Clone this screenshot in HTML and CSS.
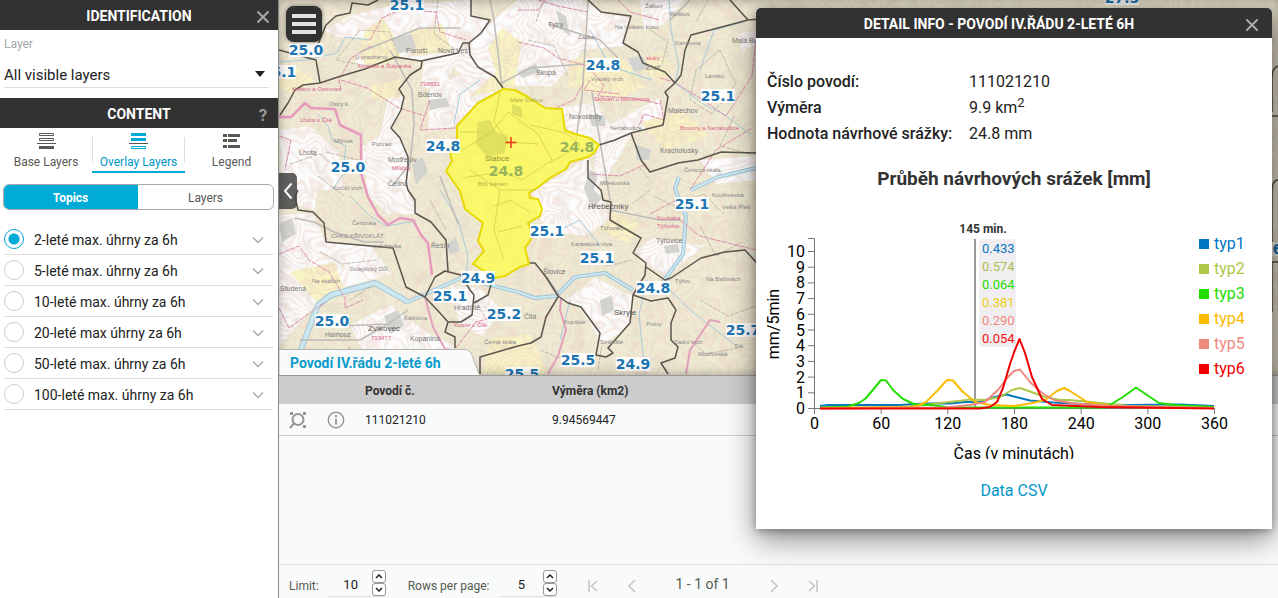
FILE: index.html
```html
<!DOCTYPE html>
<html lang="cs">
<head>
<meta charset="utf-8">
<title>Povodí – návrhové srážky</title>
<link rel="stylesheet" href="styles.css">
</head>
<body class="app">
<aside class="sidebar">
  <header class="bar"><h2 class="bar-title">Identification</h2>
    <button class="bar-button" aria-label="Close"><svg width="14" height="14" viewBox="0 0 14 14"><path d="M1.5 1.5l11 11M12.500 1.500l-11 11" class="cross"/></svg></button>
  </header>
  <div class="layer-field">
    <label for="layer">Layer</label>
    <div class="select-wrap">
      <select id="layer"><option>All visible layers</option></select>
      <svg class="caret" width="10" height="6" viewBox="0 0 10 6"><path d="M0 0h10L5 6z" fill="#222"/></svg>
    </div>
  </div>
  <header class="bar"><h2 class="bar-title">Content</h2><button class="bar-button help" aria-label="Help">?</button></header>
  <nav class="tabs">
    <button class="tab"><svg width="19" height="17" viewBox="0 0 19 17"><path d="M2.500 1.500h14v2h-14zM2.500 6.500h14v2h-14z" fill="none" stroke="#5a5a55"/><path d="M0 11.500h19" stroke="#5a5a55"/><path d="M2 14h15v3H2z" fill="#5a5a55"/></svg>Base Layers</button>
    <button class="tab active"><svg width="19" height="17" viewBox="0 0 19 17"><path d="M2 1h15v3H2zM2 6h15v3H2z" fill="#00abd8"/><path d="M0 11.500h19" stroke="#555"/><path d="M2.500 14.500h14v2h-14z" fill="none" stroke="#00abd8"/></svg>Overlay Layers</button>
    <button class="tab"><svg width="19" height="17" viewBox="0 0 19 17"><path d="M1 2h4v3H1zM1 7h4v3H1zM1 13h4v3H1zM6 2h12v3H6zM6 7h9v3H6zM6 13h12v3H6z" fill="#5a5a55"/></svg>Legend</button>
  </nav>
  <div class="segmented"><button class="segment on">Topics</button><button class="segment">Layers</button></div>
  <ul class="topics">
    <li><input type="radio" name="topic" id="t1" checked><label for="t1">2-leté max. úhrny za 6h</label><button class="expand" aria-label="Expand"><svg width="12" height="8" viewBox="0 0 12 8"><path d="M1 1.500l5 5 5-5"/></svg></button></li>
    <li><input type="radio" name="topic" id="t2"><label for="t2">5-leté max. úhrny za 6h</label><button class="expand" aria-label="Expand"><svg width="12" height="8" viewBox="0 0 12 8"><path d="M1 1.500l5 5 5-5"/></svg></button></li>
    <li><input type="radio" name="topic" id="t3"><label for="t3">10-leté max. úhrny za 6h</label><button class="expand" aria-label="Expand"><svg width="12" height="8" viewBox="0 0 12 8"><path d="M1 1.500l5 5 5-5"/></svg></button></li>
    <li><input type="radio" name="topic" id="t4"><label for="t4">20-leté max úhrny za 6h</label><button class="expand" aria-label="Expand"><svg width="12" height="8" viewBox="0 0 12 8"><path d="M1 1.500l5 5 5-5"/></svg></button></li>
    <li><input type="radio" name="topic" id="t5"><label for="t5">50-leté max. úhrny za 6h</label><button class="expand" aria-label="Expand"><svg width="12" height="8" viewBox="0 0 12 8"><path d="M1 1.500l5 5 5-5"/></svg></button></li>
    <li><input type="radio" name="topic" id="t6"><label for="t6">100-leté max. úhrny za 6h</label><button class="expand" aria-label="Expand"><svg width="12" height="8" viewBox="0 0 12 8"><path d="M1 1.500l5 5 5-5"/></svg></button></li>
  </ul>
</aside>

<main class="main">
  <section class="map">
    <svg class="map-canvas" viewBox="279 0 999 375" preserveAspectRatio="xMinYMin slice">
      <defs>
        <filter id="contours" x="0" y="0" width="100%" height="100%">
          <feTurbulence type="fractalNoise" baseFrequency="0.016" numOctaves="3" seed="8"/>
          <feColorMatrix values="0 0 0 0 .86  0 0 0 0 .66  0 0 0 0 .58  1 0 0 0 0"/>
          <feComponentTransfer><feFuncA type="table" tableValues="0 0 .7 0 0 .7 0 0 .7 0 0 .7 0 0 .7 0 0 .7 0 0 .7 0 0 .7 0 0 .7 0 0 .7 0 0 .7 0 0 .7 0 0 .7 0 0 .7 0 0 .7 0 0"/></feComponentTransfer>
        </filter>
        <filter id="relief" x="0" y="0" width="100%" height="100%">
          <feTurbulence type="fractalNoise" baseFrequency="0.07" numOctaves="3" seed="3"/>
          <feColorMatrix values="0 0 0 0 .6  0 0 0 0 .57  0 0 0 0 .48  1.600 0 0 0 -.75"/>
        </filter>
      </defs>
      <rect x="279" width="999" height="375" fill="#efebd3"/>
      <g fill="#fcfcfd">
        <path d="M325 30l25-14 40-10 80-6 2 14 18 8-14 20-10 2-4 12-37 5-28-4-30 13-12-8 10-22-30-4z"/>
        <path d="M424 62l36-8 10-10 20-20 28-24h66l20 14 27 4-8 28-40 4-30 36-32 0-20-4-22 8-26-22-12 30-20-14z"/>
        <path d="M388 96h16l-4 18-8 14 12 16 6 30-2 18 10 22-30 0-20-18-6-50 18-10z"/>
        <path d="M430 90l34-18 38 14-30 26-20 14-24 6z"/>
        <path d="M560 108l36-6 16 26-14 14-34-12z"/><path d="M532 192l56-34 12 32 10 30-26 16-40-6z"/>
        <path d="M565 300l30-22 38 18-4 30-28 20-6-14-16-26z"/><path d="M600 130l60-32 6 26-34 10-22 38-12 14-4-20z"/>
        <path d="M280 130l30-4 28 26 6 38-26 0-4 20-32-10z"/><path d="M279 215l34-2 12 28 46 5 20 28-50 14-26 18-36 40z"/>
        <path d="M640 0h44l-20 24-20 6z"/><path d="M636 250l18-12 50 8-36 30-22-12z"/><path d="M350 325l40-20 40 30 24 10-10 30h-70z"/><path d="M450 286l30 2 22 22-20 26-22-12z"/>
        <path d="M700 160l56-4v24l-40 4z"/><path d="M738 34l18-4v14l-14 8z"/>
      </g>
      <g fill="#f8f3c4">
        <path d="M365 30l18-12 12 20 6 20-34 12-8-18zM410 30l32-6 10 28-40 4zM570 60l50-4 26 30-26 12-52-10zM370 86l30-6 4 16-30 4zM470 96l26-24-8-24 14-20 20 14-8 46zM640 122l44-10 26 24-44 14zM290 272l44-10 10 26-26 16zM660 50l14 20-14 14-22-20z"/>
        <path d="M490 338l40-4 18 40h-66zM614 212l26 12-10 20-30-14zM284 60l30 20-20 14-15-6z"/>
      </g>
      <rect class="relief" x="279" width="999" height="375" filter="url(#relief)"/>
      <rect class="contours" x="279" width="999" height="375" filter="url(#contours)"/>
      <g fill="#d2d2cf">
        <path d="M392 38l20-4 4 14-18 6zM412 165l10-8 6 14-12 14zM556 10l10 6 4 20-10-8zM628 58l14-2 8 12-16 4zM518 72l18-8 4 8-18 6zM588 114l16 2 2 10-14 0zM600 300l12-4 2 14-12 6zM384 316l14-6 6 16-14 8zM428 100l18-2 4 8-20 4zM280 224l12-6 4 16-14 8zM635 144l16 6-2 10-12 0zM664 246l14-2 2 8-14 2zM446 245l10-8 4 14-10 4zM584 188l6-18 8 4-4 16 8 8-10 12z"/>
      </g>
      <g class="river-edge"><path d="M300 352L318 305l13-10 44-12 33 19"/><path class="narrow" d="M408 302l53-24 57 14 17 6 21-2 19-19 30-4 28 17"/><path class="narrow" d="M663 282l20-28 3-38-11-27 4-12"/><path class="narrow" d="M691 190l27-13 38-9"/></g>
      <g class="river"><path d="M300 352L318 305l13-10 44-12 33 19"/><path class="narrow" d="M408 302l53-24 57 14 17 6 21-2 19-19 30-4 28 17"/><path class="narrow" d="M663 282l20-28 3-38-11-27 4-12"/><path class="narrow" d="M691 190l27-13 38-9"/></g>
      <g class="stream">
        <path d="M279 62l28-2 30-7 8-16 25 3M318 114l10 12 4 14 14 6-4 30-10 14M675 83l30 22 20 10 26 20M669 0l2 30 8 36-4 17M590 30l20 36 42 14M700 70l14-40 30-8M440 190l18 30 10 36-2 20M350 196l20 20 16 10 30-5M560 230l20-10 20 26M560 340l10-40M645 374l-6-60 8-34M670 290l20 20 44 34M454 124l6-30 20-14"/>
      </g>
      <g class="road">
        <path d="M390 50l22 40 2 34-4 40-18 22M490 0l4 20 8 66M294 218l20 4 20 10 30 10 20 0M588 0l-2 36-4 60-6 44M500 84l30-16 54-4M408 310l-20 14-50 2M440 176l18 48M620 60l-20-20-52-16M610 210l50 10 20 0M610 200l-12-70-6-38M546 276l14 20M690 0l-20 20M360 52l60-24 40 0M300 340l60 0 28-16"/>
      </g>
      <g class="parcel">
        <path d="M336 60l24-30 30 2 8 26-30 8zM438 0l-4 34 30 22M326 152l40 10M290 164l30-10 24 20M350 300l22-14M430 200l16 30M548 128l20-14M528 40l26 6 14 30M544 0l-8 22M654 196l20 10 30-12 20 20M700 226l16 30 26-14M592 256l16 10 24-6M650 190l-18 14M640 168l10 12M700 300l28 16 28-10M690 340l16 14 32-6M598 370l4-26M540 350l20 8M348 348l30 10 30-8M320 252l22 12 34-4M318 176l26 20M720 50l-24 20-6 30 22 14 24-30zM650 30l18 12-6 22M476 300l10 20M708 0l-12 22M734 116l-14 30 30 8"/>
      </g>
      <g class="boundary thick"><path d="M279 117l12 0 14-14 6 5 24 1 5 16 21 10v38l7 24 10 18 10 10 12-7 13 2 8 15 7 8 4 32"/></g>
      <g class="boundary mid"><path d="M425 297l8 30 12 22 12 2M561 298l-1 12 6 20-8 26-10 18M686 374l4-24 20-30 10 2"/></g>
      <g class="boundary"><path d="M370 40l12-22 18-8 36 2 4 20 26 8M341 80l26 8 32 20 26 8M341 90l-2-10 12-22 20-12M279 136l12 4-6 30M430 100l-10 30 36-2M518 42l26 6 14 10 30 8 16 20-6 10 34 2 28 6M590 80l-6 10 36 4M556 108l18-8 10-18M518 10l20 0 8-10M538 0l20 6 30 6M618 0l12 12 30 8M660 100l4 20-20-6-6 14M690 190l26-40 36-22M279 254l20-8 10 14 20 12 16 26 0 10 18-8M279 308l10 20 36-26M456 348l20-26 30-8M680 220l20 16 56 14M590 174l30 2 26-12M660 78l14 4 26 16 26 18 26-40 4-36M650 214l30-16"/></g>
      <g class="roads-black">
        <path d="M378 0l-10 5-16-2-2 10-14 3-10 9-5 12-4 10M279 50l37 10 4 23M280 115l8-12 7-13 8-5 17-2 18-6 27-8 30-12 26 4 37-8 5-10h6l12-10 9-13-19-4V0"/>
        <path d="M422 61l-1 7-11 7-11 14 5 8-3 13-10 18 9 10 8 19v11l-2 15 2 7 7 10v13l16 9 15 18 2 31"/>
        <path d="M469 43l1 12 8 12 17 10 8 11M588 0l13 12 30 4-8 27 15 9 5 11 22 9 10 11-10 9 3 5-5 28-32 8-16 7-16 5"/>
        <path d="M675 83l6-8 4-25 6-15 27-7 30-8 12-1M730 0l18 20M631 133l10 27 9 12 28-9 20-3 23-8 35 1"/>
        <path d="M588 160v18l13 12 2 10 8 2-1 18 31 18-8 15 13 10-1 12-12 20-3 28-22 25 5 5-7 4-10-2 4-22-19-26-13-4-10-7-12-19-11-14h-7"/>
        <path d="M646 267l19 13 6-2 30-20 24-6 20-2 11 12M633 295l18 6 17-3 8 12-5 13v17l7 7-3 11-14 5 7 11M558 297l-12 20-5 20-10 6-13 3-38 11v17"/>
        <path d="M298 190l-3 7 3 13 15 2 11 11 2 19 67 6 13 39 19 10 15 16 8 9-3 10 10 5v11M425 297l10-20 10-6 16 4 9 15 4 5-2 20-11 7-13 0M474 303l14-8 4-14M756 262l12 30-8 40M1278 66q-6 2-6 12v34M1278 180q-6 0-6 12v50M1272 116h6M1278 262h-6v50"/>
      </g>
      <g class="place">
        <text x="406" y="53">Panoší</text><text x="438" y="53">Nová Ves</text><text x="355" y="59" class="small">U prachárny</text><text x="418" y="97">Bdenov</text><text x="329" y="106" class="small">Ostrý k.</text><text x="299" y="155">Lhota</text><text x="388" y="162">Modřejov</text><text x="334" y="143" class="small">Mlýnek</text><text x="372" y="146" class="small">Pohrad</text><text x="388" y="186">Čelina</text><text x="333" y="190" class="small">Kočičí vrch</text>
        <text x="548" y="27">Tytry</text><text x="536" y="75">Skupá</text><text x="578" y="39" class="small">Zadka</text><text x="615" y="29" class="small">Na Velkém kusu</text><text x="646" y="70">Zhoř</text><text x="591" y="81" class="small">Vysoký vrch</text><text x="645" y="8" class="small">Žalkov</text><text x="670" y="16" class="small">Roškov</text><text x="675" y="45" class="small">Kamenná</text><text x="705" y="78" class="small">Lánsko</text><text x="569" y="119">Novosedly</text><text x="660" y="153">Kracholusky</text><text x="610" y="130" class="small">Nezabudice</text><text x="668" y="113">Malechov</text><text x="732" y="43">Malá Buková</text><text x="600" y="185" class="small">Milešovská</text><text x="684" y="172" class="small">Čertova skála</text>
        <text x="588" y="209" class="town">Hřebečníky</text><text x="600" y="230" class="small">Týřovský</text><text x="656" y="243">Týřovice</text><text x="571" y="246" class="small">Karásková niva</text><text x="614" y="315" class="town">Skryje</text><text x="524" y="319">Čilá</text><text x="543" y="274">Šlovice</text><text x="368" y="331" class="town">Zvíkovec</text><text x="325" y="337">Hamouz</text><text x="410" y="341">Kopanina</text><text x="404" y="320" class="small">Kalinova</text><text x="280" y="291">Studená</text><text x="312" y="283" class="small">Na skalích</text><text x="331" y="238" class="small">CHKO KŘIVOKLÁT</text><text x="373" y="248" class="small">u dubánka</text><text x="350" y="271" class="small">Dolejšický Důl</text><text x="352" y="225" class="small">Čertovka</text><text x="431" y="248">Řešín</text><text x="454" y="310">Hradiště</text><text x="484" y="344" class="small">Černá skála</text><text x="600" y="344" class="small">Strážiště</text><text x="646" y="326" class="small">Prdny</text><text x="564" y="324" class="small">Kupšice</text><text x="698" y="356" class="small">Modřovská</text><text x="734" y="348" class="small">Tok</text><text x="706" y="281" class="small">Na Babínách</text><text x="722" y="209" class="small">Velká Pleš</text><text x="712" y="197" class="small">Kouřimecká</text><text x="675" y="283" class="small">Týřov</text><text x="674" y="344" class="small">Zadní vrch</text>
        <g class="pink"><text x="358" y="68">Kostelík a Štěpánka</text><text x="292" y="91">Krašov a Ostrovec</text><text x="300" y="122">Lhota u Čilé</text><text x="594" y="101">Skřivaň u Rousínova</text><text x="680" y="130">Broumy a Nezabudice</text><text x="657" y="220">Koubská</text><text x="657" y="228">Týřovice</text><text x="454" y="327">Kostel v Čilé</text><text x="420" y="86">798831</text><text x="646" y="60">skály</text><text x="371" y="340">793477</text><text x="392" y="170">Milíčov</text></g>
      </g>
      <path class="basin" d="M503 89l12 1 13 7 17 11 17 1 3 21 10 4 15 4 9 7-5 8-6 4-18 5-4 7-16 9-13 10-8 5 1 5 8 1 4 10-2 7-12 7 5 10-3 8-5 7 2 8 2 8-9 3-15 9-10 2-22-14 11-13-6-10 5-18-18-14-5-18-14-20 6-10-3-14 8-3v-18l21-23 22-12z"/>
      <g class="basin-lines"><path d="M462 150l30-18 16-20 30 22 14 26-30 20-20-8-40 6M500 92l-6 30 14 20 30 2M500 190l-6 40 10 30M530 125l36 8 14 12-30 18M470 170l30 20 36 0M494 206l16-6 20 12M498 232l24-6M460 132l18 0"/></g>
      <g fill="#a5af48" opacity=".3"><path d="M478 122l12-2 6 12 12 4-4 18-18 2-10-12zM512 104l10 4 0 10-10-4z"/></g>
      <text x="485" y="161" class="village">Slabce</text><text x="478" y="186" class="village faint">Bílý kámen</text><text x="510" y="102" class="village faint">Malé Slabce</text>
      <path d="M511 137v11M505.500 142.500h11" stroke="#f3371b" stroke-width="1.500"/>
      <g class="values" id="values"></g>
    </svg>
    <button class="menu" aria-label="Menu"><svg width="24" height="20" viewBox="0 0 24 20"><path d="M0 0h24v4H0zM0 8h24v4H0zM0 16h24v4H0z" fill="#e6e1e6"/></svg></button>
    <button class="collapse" aria-label="Collapse panel"><svg width="10" height="18" viewBox="0 0 10 18"><path d="M8.500 1.500L2 9l6.500 7.500" fill="none" stroke="#fff" stroke-width="2"/></svg></button>
    <button class="result-tab"><svg width="201" height="27" viewBox="0 0 201 27"><path d="M0 .5h186q5 0 7 6l8 21H0z" fill="#f9fafa" stroke="#b5b5b0"/></svg><span>Povodí IV.řádu 2-leté 6h</span></button>
  </section>

  <section class="results">
    <table class="grid">
      <colgroup><col class="c-tools"><col class="c-id"><col></colgroup>
      <thead><tr><th></th><th>Povodí č.</th><th>Výměra (km2)</th></tr></thead>
      <tbody><tr><td><div class="tools">
        <button aria-label="Zoom to"><svg width="18" height="18" viewBox="0 0 18 18" fill="none" stroke="#96968e"><circle cx="9" cy="8.500" r="5.500" stroke-width="2"/><path d="M5 12.500l-4 4.500" stroke-width="2"/><path d="M1 1h3v3H1zM14 1h3v3h-3zM14 14h3v3h-3z" fill="#96968e" stroke="none"/></svg></button>
        <button aria-label="Info"><svg width="18" height="18" viewBox="0 0 18 18" fill="none" stroke="#96968e"><circle cx="9" cy="9" r="7.700" stroke-width="1.400"/><path d="M9 7.500v6M9 4v2" stroke-width="1.800"/></svg></button>
      </div></td><td>111021210</td><td>9.94569447</td></tr></tbody>
    </table>
    <footer class="pager">
      <label for="limit">Limit:</label>
      <div class="spin"><input id="limit" value="10"><div class="steps"><button aria-label="More"><svg width="8" height="5" viewBox="0 0 8 5"><path d="M1 4l3-3 3 3"/></svg></button><button aria-label="Less"><svg width="8" height="5" viewBox="0 0 8 5"><path d="M1 1l3 3 3-3"/></svg></button></div></div>
      <label for="rows" class="rows-label">Rows per page:</label>
      <div class="spin"><input id="rows" value="5"><div class="steps"><button aria-label="More"><svg width="8" height="5" viewBox="0 0 8 5"><path d="M1 4l3-3 3 3"/></svg></button><button aria-label="Less"><svg width="8" height="5" viewBox="0 0 8 5"><path d="M1 1l3 3 3-3"/></svg></button></div></div>
      <div class="pages">
        <button aria-label="First"><svg width="10" height="12" viewBox="0 0 10 12"><path d="M1 0v12M9 1L3.500 6 9 11"/></svg></button>
        <button aria-label="Previous"><svg width="10" height="12" viewBox="0 0 10 12"><path d="M8 0L2 6l6 6"/></svg></button>
        <span class="count">1 - 1 of 1</span>
        <button aria-label="Next"><svg width="10" height="12" viewBox="0 0 10 12"><path d="M2 0l6 6-6 6"/></svg></button>
        <button aria-label="Last"><svg width="10" height="12" viewBox="0 0 10 12"><path d="M9 0v12M1 1l5.500 5L1 11"/></svg></button>
      </div>
    </footer>
  </section>
</main>

<section class="dialog" role="dialog" aria-labelledby="dlg">
  <header class="bar dialog-bar"><h2 class="bar-title" id="dlg">Detail info - Povodí IV.řádu 2-leté 6h</h2>
    <button class="bar-button" aria-label="Close"><svg width="14" height="14" viewBox="0 0 14 14"><path d="M1.500 1.500l11 11M12.500 1.500l-11 11" class="cross"/></svg></button>
  </header>
  <table class="facts">
    <tr><th>Číslo povodí:</th><td>111021210</td></tr>
    <tr><th>Výměra</th><td>9.9 km<sup>2</sup></td></tr>
    <tr><th>Hodnota návrhové srážky:</th><td>24.8 mm</td></tr>
  </table>
  <h3 class="chart-title">Průběh návrhových srážek [mm]</h3>
  <svg class="chart" viewBox="756 215 516 244" role="img" aria-label="Průběh návrhových srážek">
    <g id="axes" class="axes"><path d="M808 238.500h6.500v170h400"/></g>
    <path d="M975 239v169" stroke="#999" stroke-width="2"/>
    <rect x="979" y="239" width="37" height="108" rx="4" fill="#f0eef0"/>
    <text x="983" y="233" text-anchor="middle" class="time">145 min.</text>
    <g class="hover-values"><text x="982" y="253" fill="#0a77c4">0.433</text><text x="982" y="271" fill="#aabf50">0.574</text><text x="982" y="289" fill="#22dd00">0.064</text><text x="982" y="307" fill="#f0cf18">0.381</text><text x="982" y="325" fill="#f08880">0.290</text><text x="982" y="343" fill="#ee1010">0.054</text></g>
    <g class="curves">
      <path stroke="#0077c0" d="M820 406L828 405 880 405 900 405 925 403.500 950 403.500 965 402 980 402 995 397 1007 394.500 1012 396 1030 400.500 1053 402.500 1093 404.500 1130 405 1180 404.500 1214 406"/>
      <path stroke="#adc748" d="M820 408L900 407 925 405 940 403 958 401 970 399.500 985 400 1000 397 1012 390 1020 388 1030 391.500 1045 397 1060 400 1070 400 1100 403 1130 406 1214 407"/>
      <path stroke="#22dd00" d="M820 407.500L848 406.500 859 403 865 399 872 391 881 380 886 380.500 893 390 903 399 914 404 930 405 950 407.500 1105 407.500 1113 403 1123 397 1136 387.500 1150 397 1159 403 1175 405 1214 407"/>
      <path stroke="#fabb00" d="M820 408L915 407 926 402 937 391 947 380 953 380.500 962 391 975 402 990 405 1014 406 1030 403.500 1045 400 1057 391 1064 388 1070 391 1087 402 1100 404.500 1120 407 1214 408"/>
      <path stroke="#f08880" d="M820 408.500L945 407.500 970 405 985 402 998 390 1008 377 1014 371 1020 369.500 1030 382 1042 393 1055 400.500 1075 403.500 1110 406 1214 408"/>
      <path stroke="#ee0000" d="M820 408.500L980 408.500 990 407 997 402 1003 388 1010 364 1014.500 351 1019.500 339 1025 353 1032 377 1042 399 1052 405 1100 407 1214 408.500"/>
    </g>
    <g id="legend"></g>
    <text x="1014" y="459" text-anchor="middle" class="axis-title">Čas (v minutách)</text>
    <text transform="translate(779 324) rotate(-90)" text-anchor="middle" class="axis-title">mm/5min</text>
  </svg>
  <a class="csv" href="#">Data CSV</a>
</section>
<script src="app.js"></script>
</body>
</html>
```
FILE: styles.css
```css
* { box-sizing: border-box; }
body { margin: 0; font-family: Roboto, "Liberation Sans", sans-serif; font-size: 14px; color: #222; }
button { font: inherit; color: inherit; background: none; border: 0; padding: 0; cursor: pointer; }
svg { display: block; }
.app { display: flex; position: relative; height: 100vh; overflow: hidden; }

.sidebar { width: 279px; flex: none; background: #fff; border-right: 1px solid #888; z-index: 1; }
.bar { display: grid; grid-template-columns: 30px 1fr 30px; align-items: center; height: 30px; background: #323232; color: #fff; }
.bar-title { grid-column: 2; margin: 0; padding-top: 2px; font-size: 14px; font-weight: 700; line-height: 28px; text-align: center; text-transform: uppercase; white-space: nowrap; }
.bar-button { display: grid; place-items: center; height: 30px; padding-top: 3px; color: #999; }
.help { font-size: 17px; font-weight: 700; }
.cross { fill: none; stroke: #aaa; stroke-width: 2; }

.layer-field { height: 68px; padding: 6px 9px 0 4px; }
.layer-field label { display: block; font-size: 12px; line-height: 16px; color: #a4aaa8; }
.select-wrap { display: grid; align-items: center; margin-top: 4px; border-bottom: 1px solid #ddd; }
.select-wrap select { grid-area: 1 / 1; appearance: none; width: 100%; height: 31px; padding: 7px 0 0; border: 0; background: none; color: #222; font: 15px Roboto, sans-serif; }
.caret { grid-area: 1 / 1; justify-self: end; margin: 4px 4px 0 0; pointer-events: none; }

.tabs { display: grid; grid-template-columns: 92px 93px 1fr; height: 45px; }
.tab { display: flex; flex-direction: column; align-items: center; gap: 4px; padding-top: 4px; color: #5a5a55; font-size: 12px; line-height: 18px; border-bottom: 2px solid transparent; }
.tab.active { color: #0096c8; border-bottom-color: #00abd8; background: linear-gradient(#ddd, #ddd) 0 9px / 1px 26px no-repeat, linear-gradient(#ddd, #ddd) 100% 9px / 1px 26px no-repeat; }
.segmented { display: flex; height: 26px; margin: 11px 4px 0 3px; border: 1px solid #aaa; border-radius: 6px; overflow: hidden; }
.segment { flex: 1; padding-top: 2px; font-size: 12px; color: #555; }
.segment.on { background: #00abd8; color: #fff; font-weight: 700; margin: -1px 0 -1px -1px; }
.topics { margin: 14px 5px 0 4px; padding: 0; list-style: none; }
.topics li { display: flex; align-items: center; height: 31px; border-bottom: 1px solid #ddd; }
.topics input { appearance: none; width: 20px; height: 20px; margin: 0 10px 0 0; border: 1px solid #ccc; border-radius: 50%; background: #fff; }
.topics input:checked { border-color: #00a5d6; background: radial-gradient(#00abd8 5px, #fff 6px); }
.topics label { flex: 1; padding-top: 2px; }
.expand { padding: 2px 9px 0; }
.expand path { fill: none; stroke: #aaa; stroke-width: 1.5; }

.main { display: flex; flex-direction: column; flex: 1; min-width: 0; }
.map { position: relative; flex: 1; min-height: 0; overflow: hidden; }
.map::after { content: ""; position: absolute; inset: 0; box-shadow: inset 0 0 12px rgba(0, 0, 0, .35); pointer-events: none; }
.map-canvas { width: 100%; height: 100%; font-family: "Liberation Sans", sans-serif; }
.contours { opacity: .75; }
.relief { opacity: .45; }
.river-edge, .river, .stream, .road, .parcel, .boundary, .roads-black, .basin-lines { fill: none; stroke-linejoin: round; }
.river-edge { stroke: #a3c5d8; stroke-width: 6; }
.river { stroke: #cbe8f1; stroke-width: 4; }
.river-edge .narrow { stroke-width: 4; }
.river .narrow { stroke-width: 2; }
.stream { stroke: #a9cbdc; stroke-width: 1; }
.road { stroke: #bcbcb8; stroke-width: 1.5; }
.parcel { stroke: #aaa795; stroke-width: 1; stroke-dasharray: 4 1; opacity: .7; }
.boundary { stroke: #dc8fae; stroke-width: 1; stroke-dasharray: 5 1; }
.boundary.mid { stroke: #e2a0bd; stroke-width: 2; stroke-dasharray: none; }
.boundary.thick { stroke: #e89abc; stroke-width: 2.5; stroke-dasharray: none; }
.roads-black { stroke: #5b554d; stroke-width: 1.5; }
.place { font-size: 7px; fill: #777; }
.place .small { font-size: 6px; fill: #888; }
.place .town { font-size: 8px; fill: #555; }
.place .pink { font-size: 6px; fill: #d9648d; }
.basin { fill: #ffff32; fill-opacity: .65; stroke: #e6d800; stroke-width: 2; stroke-linejoin: round; }
.basin-lines { stroke: #b2a832; opacity: .4; }
.village { font-size: 8px; fill: #8f8f3c; }
.village.faint { font-size: 6px; fill: #b3b04a; }
.values { font: bold 14px "DejaVu Sans", sans-serif; fill: #1c75b5; }
.values rect { fill: #fff; fill-opacity: .9; }
.values .under { fill: #98b35c; }

.menu { position: absolute; left: 7px; top: 6px; width: 36px; height: 36px; display: grid; place-items: center; background: #323232; border-radius: 8px; box-shadow: 0 0 4px rgba(0, 0, 0, .5); }
.collapse { position: absolute; left: 0; top: 173px; width: 18px; height: 36px; display: grid; place-items: center; background: rgba(70, 70, 70, .85); border-radius: 0 5px 5px 0; }
.result-tab { position: absolute; left: 0; bottom: -1px; z-index: 1; display: grid; align-items: center; color: #0c9bcb; font-weight: 700; }
.result-tab svg, .result-tab span { grid-area: 1 / 1; }
.result-tab span { padding-left: 11px; text-align: left; }

.results { display: flex; flex-direction: column; height: 223px; border-top: 1px solid #999; background: #f9fafa; }
.grid { width: 100%; border-collapse: collapse; table-layout: fixed; font-size: 12px; text-align: left; }
.c-tools { width: 86px; }
.c-id { width: 187px; }
.grid th, .grid td { padding: 2px 0 0; }
.grid th { height: 28px; background: #ccc; color: #333; font-weight: 700; }
.grid td { height: 31px; border-bottom: 1px solid #ccc; }
.tools { display: flex; gap: 20px; padding-left: 10px; }
.pager { display: flex; align-items: flex-end; height: 34px; margin-top: auto; padding: 0 10px 1px; border-top: 1px solid #ddd; font-size: 12px; color: #555b50; }
.pager label { line-height: 22px; }
.spin { display: flex; align-items: center; width: 58px; margin-left: 9px; border-bottom: 1px solid #ddd; }
.spin input { width: 44px; height: 22px; padding: 2px 0 0 2px; border: 0; background: none; text-align: center; font: 13px Roboto, sans-serif; color: #222; }
.steps { display: grid; width: 14px; }
.steps button { display: grid; place-items: center; height: 13px; border: 1px solid #999; border-radius: 3px; background: #fff; }
.steps path { fill: none; stroke: #222; stroke-width: 1.5; }
.rows-label { margin-left: 22px; }
.pages { display: flex; align-items: center; gap: 29px; height: 28px; margin-left: 31px; }
.pages path { fill: none; stroke: #c4c4c4; stroke-width: 1.5; }
.pages button { padding-top: 5px; }
.count { margin: 0 10px; padding-top: 2px; font-size: 14px; white-space: nowrap; }

.dialog { position: absolute; top: 8px; right: 6px; z-index: 2; display: flex; flex-direction: column; width: 516px; background: #fff; border-radius: 5px 5px 0 0; box-shadow: 0 10px 30px rgba(0, 0, 0, .45), 0 2px 8px rgba(0, 0, 0, .3); }
.dialog-bar { grid-template-columns: 24px 1fr 40px; border-radius: 5px 5px 0 0; }
.dialog-bar .bar-title { padding-right: 14px; }
.facts { margin: 31px 11px 0; border-spacing: 0; align-self: flex-start; font-size: 16px; text-align: left; }
.facts th, .facts td { height: 26px; padding: 0; line-height: 20px; }
.facts th { width: 202px; font-weight: 500; white-space: nowrap; }
.facts sup { font-size: 13px; line-height: 0; }
.chart-title { margin: 20px 0 24px; font-size: 19px; line-height: 24px; font-weight: 700; text-align: center; color: #333; }
.chart { width: 100%; overflow: hidden; font-size: 16px; }
.axes path { fill: none; stroke: #777; }
.time { font-size: 12px; font-weight: 700; fill: #333; }
.hover-values { font-size: 13px; }
.curves { fill: none; stroke-width: 2; stroke-linejoin: round; }
.csv { margin: 22px 0 28px; align-self: center; font-size: 16px; line-height: 20px; color: #0096c8; text-decoration: none; }
```
FILE: app.js
```js
const NS = 'http://www.w3.org/2000/svg';
function add(parent, name, attrs, text) {
  const el = document.createElementNS(NS, name);
  for (const key in attrs) el.setAttribute(key, attrs[key]);
  if (text !== undefined) el.textContent = text;
  parent.appendChild(el);
}

// [value, centre x, baseline y, class]
const values = [
  ['25.1', 407, 10], ['25.0', 306, 55], ['25.1', 279, 77], ['24.8', 603, 70], ['25.1', 718, 101],
  ['25.0', 348, 172], ['24.8', 443, 151], ['24.8', 577, 152, 'under'], ['24.8', 506, 176, 'under'],
  ['25.1', 692, 209], ['25.1', 547, 236], ['25.1', 597, 263], ['24.9', 478, 283], ['25.1', 450, 301],
  ['25.2', 504, 319], ['24.8', 653, 293], ['25.0', 332, 326], ['25.7', 743, 335], ['25.5', 578, 365],
  ['24.9', 633, 369], ['25.5', 522, 379], ['27.5', 1122, 3], ['6.3', 1285, 254]
];
const layer = document.getElementById('values');
for (const [value, x, y, kind] of values) {
  if (!kind) add(layer, 'rect', { x: x - 17, y: y - 12, width: 34, height: 14 });
  add(layer, 'text', { x, y, 'text-anchor': 'middle', class: kind || '' }, value);
}

const axes = document.getElementById('axes');
for (let i = 0; i <= 10; i++) {
  const y = 408.5 - i * 15.7;
  add(axes, 'path', { d: `M808 ${y}h6` });
  add(axes, 'text', { x: 805, y: y + 5.5, 'text-anchor': 'end' }, i);
}
for (let i = 0; i <= 6; i++) {
  const x = 814.5 + i * 66.67;
  add(axes, 'path', { d: `M${x} 408v6` });
  add(axes, 'text', { x, y: 429, 'text-anchor': 'middle' }, i * 60);
}

const legend = document.getElementById('legend');
['#0077c0', '#adc748', '#22dd00', '#fabb00', '#f08880', '#ee0000'].forEach((color, i) => {
  const y = 239 + i * 25;
  add(legend, 'rect', { x: 1199, y, width: 10, height: 10, fill: color });
  add(legend, 'text', { x: 1214, y: y + 10, fill: color }, 'typ' + (i + 1));
});
```
